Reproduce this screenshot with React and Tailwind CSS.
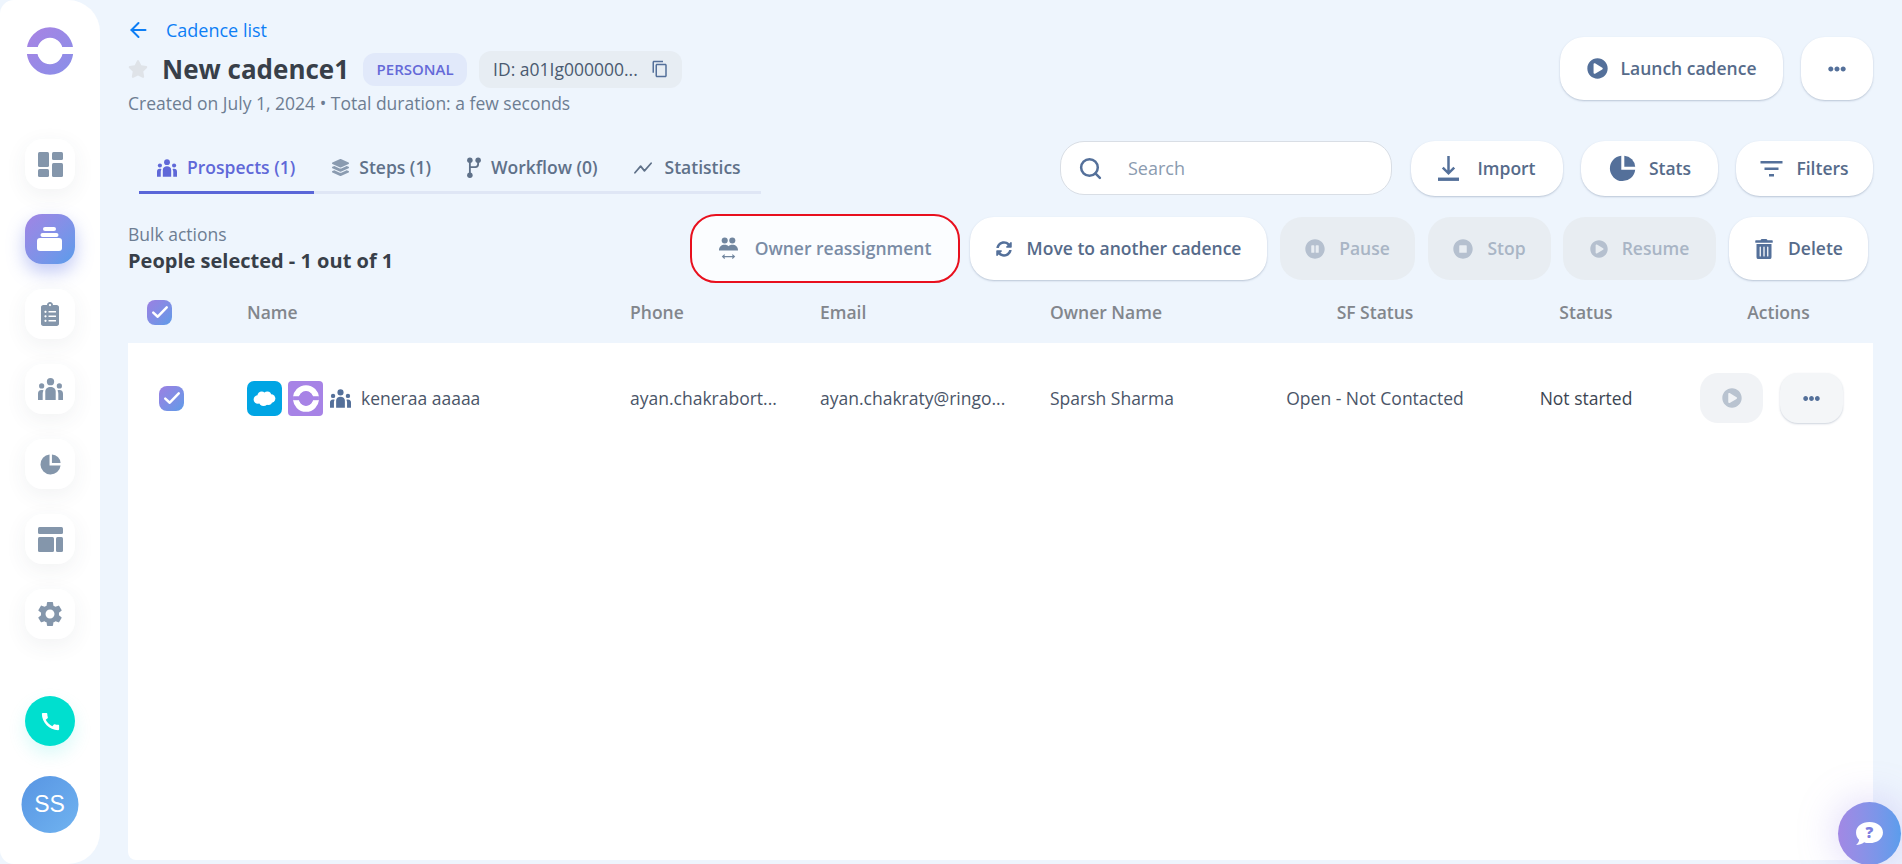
import React from "react";
import { FaClipboardList, FaStar, FaLayerGroup, FaSyncAlt, FaPlayCircle, FaPauseCircle, FaStopCircle, FaTrashAlt, FaEllipsisH } from "react-icons/fa";
import { MdContentCopy, MdSettings, MdCall } from "react-icons/md";
import { Search, ArrowLeft } from "lucide-react";

const Ring = ({ className, color = "url(#lg)", gap = "#fff" }) => (
  <svg viewBox="0 0 46 48" className={className}>
    <defs>
      <linearGradient id="lg" x1="0" y1="0" x2="1" y2="1">
        <stop offset="0" stopColor="#a584e4" />
        <stop offset="1" stopColor="#8c8ee8" />
      </linearGradient>
    </defs>
    <ellipse cx="23" cy="24" rx="18" ry="18.5" fill="none" stroke={color} strokeWidth="10.5" />
    <rect x="0" y="20" width="46" height="7" fill={gap} />
    <ellipse cx="23" cy="24" rx="12.5" ry="12.5" fill={gap} />
  </svg>
);

const GroupIcon = ({ className }) => (
  <svg viewBox="0 0 24 21" className={className} fill="currentColor">
    <circle cx="12" cy="3.500" r="3.500" />
    <circle cx="3.500" cy="7.500" r="2.500" />
    <circle cx="20.500" cy="7.500" r="2.500" />
    <path d="M7 21v-8c0-3 2.200-4.500 5-4.500s5 1.500 5 4.500v8z" />
    <path d="M0 21v-6c0-2 1-3.500 3.500-3.500.7 0 1.200.1 1.800.4-.5 1-.8 2-.8 3.100v6z" />
    <path d="M24 21v-6c0-2-1-3.500-3.500-3.500-.7 0-1.200.1-1.800.4.500 1 .8 2 .8 3.100v6z" />
  </svg>
);
const PieIcon = ({ className }) => (
  <svg viewBox="0 0 24 24" className={className} fill="currentColor">
    <path d="M11 1.500A10.500 10.500 0 1 0 22.500 13H11z" />
    <path d="M13.500 1.500a9.500 9.500 0 0 1 9 9h-9z" />
  </svg>
);

const DashIcon = () => (
  <svg viewBox="0 0 25 25" className="w-[25px] h-[25px]" fill="#8496ab">
    <rect x="0" y="0" width="11" height="15" rx="1.5" />
    <rect x="0" y="17" width="11" height="8" rx="1.5" />
    <rect x="14" y="0" width="11" height="8" rx="1.5" />
    <rect x="14" y="11" width="11" height="14" rx="1.5" />
  </svg>
);
const LayoutIcon = () => (
  <svg viewBox="0 0 25 25" className="w-[25px] h-[25px]" fill="#8496ab">
    <rect x="0" y="0" width="25" height="7" rx="1.5" />
    <rect x="0" y="10" width="16" height="15" rx="1.5" />
    <rect x="18" y="10" width="7" height="15" rx="1.5" />
  </svg>
);
const StackIcon = () => (
  <svg viewBox="0 0 26 24" className="w-[26px] h-[24px]" fill="#fff">
    <rect x="6" y="0" width="13" height="4" rx="2" />
    <rect x="3.5" y="6" width="18" height="4" rx="2" />
    <rect x="0" y="11" width="25" height="13" rx="3" />
  </svg>
);
const OwnerIcon = () => (
  <svg viewBox="0 0 20 24" className="w-[19px] h-[23px]" fill="#71869f">
    <circle cx="6" cy="3.5" r="3.2" />
    <circle cx="14" cy="3.5" r="3.2" />
    <path d="M0 14c0-4 2.5-6 6-6 2 0 3 .6 4 1.5C11 8.600 12 8 14 8c3.500 0 6 2 6 6z" />
    <path d="M4 20.500h12M6 18.500l-2.200 2 2.200 2M14 18.500l2.200 2-2.200 2" fill="none" stroke="#71869f" strokeWidth="1.200" />
  </svg>
);
const BranchIcon = () => (
  <svg viewBox="0 0 15 24" className="w-[14px] h-[22px]" fill="#5f7189">
    <circle cx="3" cy="3.500" r="3" />
    <circle cx="12" cy="3.500" r="3" />
    <circle cx="3" cy="20" r="3" />
    <rect x="2" y="3" width="2" height="16" />
    <path d="M11 5h2v3a4 4 0 0 1-4 4H3v-2h6a2 2 0 0 0 2-2z" />
  </svg>
);
const TrendIcon = () => (
  <svg viewBox="0 0 20 14" className="w-[19px] h-[14px]" fill="none" stroke="#5f7189" strokeWidth="1.800" strokeLinejoin="round" strokeLinecap="round">
    <path d="M1 12l6-7 4 5 7-8" />
  </svg>
);
const ImportIcon = () => (
  <svg viewBox="0 0 22 26" className="w-[21px] h-[25px]" fill="none" stroke="#54709a" strokeWidth="2.600">
    <path d="M11 0v17M5 12l6 6 6-6" />
    <rect x="0" y="22.500" width="22" height="3.500" fill="#54709a" stroke="none" />
  </svg>
);
const FilterIcon = () => (
  <svg viewBox="0 0 22 16" className="w-[23px] h-[16px]" fill="#54709a">
    <rect x="0" y="0" width="22" height="2.500" />
    <rect x="4" y="6.500" width="14" height="2.500" />
    <rect x="8.500" y="13" width="5" height="2.500" />
  </svg>
);
const CloudIcon = () => (
  <svg viewBox="0 0 24 18" className="w-[23px] h-[17px]" fill="#fff">
    <circle cx="9" cy="6" r="4.500" />
    <circle cx="15" cy="5.500" r="4" />
    <circle cx="19" cy="9" r="4.500" />
    <circle cx="5" cy="10" r="4.500" />
    <circle cx="11" cy="12" r="5" />
    <circle cx="16" cy="12" r="4" />
  </svg>
);
const Check = ({ className }) => (
  <svg viewBox="0 0 16 16" className={className} fill="none" stroke="#fff" strokeWidth="2.200" strokeLinecap="round" strokeLinejoin="round">
    <path d="M2 8.500l4 3.700 8-8.400" />
  </svg>
);
const CheckBox = () => (
  <div className="w-[25px] h-[25px] rounded-[8px] bg-linear-to-br from-[#9a7fe2] to-[#5c9be8] flex items-center justify-center">
    <Check className="w-[18px] h-[18px]" />
  </div>
);

const NavBtn = ({ children, active }) => (
  <div className={active
    ? "w-[50px] h-[50px] rounded-[17px] bg-linear-to-br from-[#a084e4] to-[#589ceb] flex items-center justify-center shadow-[0_8px_18px_rgba(100,120,230,0.4)]"
    : "w-[50px] h-[50px] rounded-[17px] bg-white flex items-center justify-center shadow-[0_6px_22px_rgba(60,70,90,0.07)]"}>
    {children}
  </div>
);

const Tab = ({ icon, label, active, gap }) => (
  <div className={active
    ? "h-[53px] pl-[18px] pr-[19px] pt-[3px] flex items-center gap-[10px] text-[17.5px] font-semibold text-[#5f68d8] border-b-[3px] border-[#5a66d8] shrink-0"
    : `h-[50px] px-[18px] pt-[3px] flex items-center ${gap} text-[17.5px] font-semibold text-[#5f7189] shrink-0`}>
    {icon}
    <span>{label}</span>
  </div>
);

const WhiteBtn = ({ className, icon, label, gap = "gap-[10px]" }) => (
  <div className={`bg-white rounded-[24px] shadow-[0_1px_2px_rgba(90,110,140,0.35)] flex items-center justify-center font-semibold text-[#566b8a] text-[17.5px] ${gap} ${className}`}>
    {icon}
    {label && <span>{label}</span>}
  </div>
);
const DisabledBtn = ({ className, icon, label }) => (
  <div className={`bg-[#e8edf2] rounded-[22px] flex items-center justify-center gap-[14px] font-semibold text-[#a9b5c5] text-[17.5px] ${className}`}>
    {icon}
    <span>{label}</span>
  </div>
);

export default function App() {
  return (
    <div className="relative w-[1902px] h-[864px] overflow-hidden bg-[#eef5fd] flex font-['Open_Sans',sans-serif]">
      <aside className="w-[100px] h-[864px] shrink-0 bg-white rounded-r-[32px] rounded-l-[14px] flex flex-col items-center pt-[27px]">
        <Ring className="w-[46px] h-[48px] mb-[64px]" />
        <div className="flex flex-col gap-[25px]">
          <NavBtn><DashIcon /></NavBtn>
          <NavBtn active><StackIcon /></NavBtn>
          <NavBtn><FaClipboardList className="text-[#8496ab] text-[24px]" /></NavBtn>
          <NavBtn><GroupIcon className="w-[25px] h-[22px] text-[#8496ab]" /></NavBtn>
          <NavBtn><PieIcon className="w-[23px] h-[23px] text-[#8496ab]" /></NavBtn>
          <NavBtn><LayoutIcon /></NavBtn>
          <NavBtn><MdSettings className="text-[#8496ab] text-[30px]" /></NavBtn>
        </div>
        <div className="mt-[57px] w-[50px] h-[50px] rounded-full bg-[#00dfcf] flex items-center justify-center shadow-[0_8px_18px_rgba(0,223,207,0.15)]">
          <MdCall className="text-white text-[23px]" />
        </div>
        <div className="mt-[30px] w-[57px] h-[57px] rounded-full bg-linear-to-br from-[#5895e3] to-[#70b3f0] flex items-center justify-center text-white text-[23px] font-['Liberation_Sans',sans-serif] -translate-x-[0.5px]">
          SS
        </div>
      </aside>

      <main className="w-[1745px] ml-[28px] flex flex-col">
        <header className="h-[141px] flex justify-between">
          <div className="pt-[18px]">
            <div className="h-[24px] flex items-center gap-[15px] text-[#0d7ef5] text-[18px] font-medium">
              <ArrowLeft className="w-[25px] h-[24px] -ml-[2px]" strokeWidth={2} />
              <span>Cadence list</span>
            </div>
            <div className="mt-[8px] h-[38px] flex items-center">
              <FaStar className="text-[#dfe3e8] text-[20px] mr-[14px]" />
              <h1 className="text-[26px] leading-[38px] font-bold text-[#383f49]">New cadence1</h1>
              <div className="ml-[14px] h-[33px] w-[104px] rounded-[12px] bg-[#e1e9fa] flex items-center justify-center text-[#6569d8] text-[15px] font-semibold">PERSONAL</div>
              <div className="ml-[12px] h-[37px] w-[203px] rounded-[12px] bg-[#e7edf3] flex items-center pl-[14px] gap-[13px] text-[#4a5a70] text-[17.5px]">
                <span className="whitespace-nowrap">ID: a01Ig000000...</span>
                <MdContentCopy className="text-[18px] text-[#54709a] shrink-0" />
              </div>
            </div>
            <p className="mt-[3px] h-[24px] leading-[24px] text-[17.5px] text-[#6d7d92]">Created on July 1, 2024 • Total duration: a few seconds</p>
          </div>
          <div className="pt-[37px] flex gap-[18px]">
            <WhiteBtn className="w-[223px] h-[63px]" gap="gap-[13px]" icon={<FaPlayCircle className="text-[#54709a] text-[21px]" />} label="Launch cadence" />
            <WhiteBtn className="w-[72px] h-[63px]" icon={<FaEllipsisH className="text-[#54709a] text-[18px]" />} />
          </div>
        </header>

        <div className="h-[55px] flex justify-between">
          <div className="ml-[11px] w-[622px] h-[53px] flex items-start border-b-[3px] border-[#dfe6f5]">
            <Tab active icon={<GroupIcon className="w-[20px] h-[18px] text-[#5f68d8]" />} label="Prospects (1)" />
            <Tab gap="gap-[10px]" icon={<FaLayerGroup className="text-[#8a9bb0] text-[17px]" />} label="Steps (1)" />
            <Tab gap="gap-[10px]" icon={<BranchIcon />} label="Workflow (0)" />
            <Tab gap="gap-[12px]" icon={<TrendIcon />} label="Statistics" />
          </div>
          <div className="flex">
            <div className="w-[332px] h-[54px] bg-white rounded-[24px] border border-[#d9dee5] flex items-center pl-[17px] gap-[25px] text-[#8b9bb0] text-[18px]">
              <Search className="w-[25px] h-[25px] text-[#54709a]" strokeWidth={2.4} />
              <span>Search</span>
            </div>
            <WhiteBtn className="ml-[19px] w-[152px] h-[55px]" gap="gap-[18px]" icon={<ImportIcon />} label="Import" />
            <WhiteBtn className="ml-[18px] w-[137px] h-[55px]" gap="gap-[12px]" icon={<PieIcon className="w-[29px] h-[29px] text-[#54709a]" />} label="Stats" />
            <WhiteBtn className="ml-[18px] w-[137px] h-[55px]" gap="gap-[13px]" icon={<FilterIcon />} label="Filters" />
          </div>
        </div>

        <div className="mt-[17px] h-[70px] flex items-center">
          <div className="w-[562px] self-start pt-[9px]">
            <p className="h-[24px] leading-[24px] text-[17.5px] text-[#6d7d92]">Bulk actions</p>
            <p className="mt-[1px] h-[28px] leading-[28px] text-[20px] font-bold text-[#383f49]">People selected - 1 out of 1</p>
          </div>
          <div className="w-[270px] h-[69px] rounded-[26px] border-2 border-[#e8101e] bg-[#fbfdff] flex items-center justify-center gap-[17px] font-semibold text-[17.5px] text-[#7a8ca5] pt-[1px]">
            <OwnerIcon />
            <span>Owner reassignment</span>
          </div>
          <WhiteBtn className="ml-[10px] w-[297px] h-[63px] pt-[1px]" gap="gap-[15px]" icon={<FaSyncAlt className="text-[#54709a] text-[16px]" />} label="Move to another cadence" />
          <DisabledBtn className="ml-[13px] w-[135px] h-[63px] pt-[1px]" icon={<FaPauseCircle className="text-[20px] text-[#b5c0cf]" />} label="Pause" />
          <DisabledBtn className="ml-[13px] w-[123px] h-[63px] pt-[1px]" icon={<FaStopCircle className="text-[20px] text-[#b5c0cf]" />} label="Stop" />
          <DisabledBtn className="ml-[12px] w-[153px] h-[63px] pt-[1px]" icon={<FaPlayCircle className="text-[18px] text-[#b5c0cf]" />} label="Resume" />
          <WhiteBtn className="ml-[13px] w-[139px] h-[63px] pt-[1px]" gap="gap-[14px]" icon={<FaTrashAlt className="text-[#54709a] text-[20px]" />} label="Delete" />
        </div>

        <div className="h-[60px] grid grid-cols-[119px_383px_190px_230px_220px_210px_212px_181px] items-center text-[17.5px] font-semibold text-[#82868c]">
          <div className="pl-[19px] pb-[2px]"><CheckBox /></div>
          <div className="pb-[2px]">Name</div>
          <div className="pb-[2px]">Phone</div>
          <div className="pb-[2px]">Email</div>
          <div className="pb-[2px]">Owner Name</div>
          <div className="pb-[2px] text-center">SF Status</div>
          <div className="pb-[2px] text-center">Status</div>
          <div className="pb-[2px] pr-[8px] text-center">Actions</div>
        </div>

        <section className="w-[1745px] h-[517px] bg-white rounded-b-[8px] pt-[30px]">
          <div className="h-[50px] grid grid-cols-[119px_383px_190px_230px_220px_210px_212px_181px] items-center text-[17.5px] text-[#4a5568]">
            <div className="pl-[31px]"><CheckBox /></div>
            <div className="flex items-center">
              <div className="w-[35px] h-[35px] rounded-[7px] bg-[#00a5e4] flex items-center justify-center"><CloudIcon /></div>
              <div className="ml-[6px] w-[35px] h-[35px] rounded-[4px] bg-[#a783e6] flex items-center justify-center">
                <Ring className="w-[26px] h-[27px]" color="#fff" gap="#a783e6" />
              </div>
              <GroupIcon className="ml-[7px] w-[21px] h-[19px] text-[#54709a]" />
              <span className="ml-[10px]">keneraa aaaaa</span>
            </div>
            <div className="whitespace-nowrap">ayan.chakrabort...</div>
            <div className="whitespace-nowrap">ayan.chakraty@ringo...</div>
            <div>Sparsh Sharma</div>
            <div className="text-center">Open - Not Contacted</div>
            <div className="text-center text-[#3c4552]">Not started</div>
            <div className="flex pl-[8px] gap-[17px]">
              <div className="w-[63px] h-[50px] rounded-[18px] bg-[#f1f3f6] flex items-center justify-center">
                <FaPlayCircle className="text-[#b9c3d0] text-[20px]" />
              </div>
              <div className="w-[63px] h-[50px] rounded-[18px] bg-[#f4f6f8] shadow-[0_1px_2px_rgba(90,110,140,0.3)] flex items-center justify-center">
                <FaEllipsisH className="text-[#54709a] text-[17px]" />
              </div>
            </div>
          </div>
        </section>
      </main>

      <div className="absolute left-[1838px] top-[802px] w-[63px] h-[63px] rounded-full bg-linear-to-r from-[#a288e4] to-[#5b9dec] flex items-center justify-center shadow-[0_0_40px_rgba(150,130,235,0.35)]">
        <svg viewBox="0 0 30 26" className="w-[29px] h-[25px]">
          <path d="M15 1c8 0 14 4.500 14 11s-6 11-14 11c-2 0-4-.3-5.500-.9C7 24 4 25 1 25c2-1.500 3-3.500 3.200-5.500C2 17.500 1 15 1 12 1 5.500 7 1 15 1z" fill="#fff" />
          <text x="15" y="18" textAnchor="middle" fontSize="16" fontWeight="800" fill="#7d7fe0" fontFamily="'Open Sans',sans-serif">?</text>
        </svg>
      </div>
    </div>
  );
}
